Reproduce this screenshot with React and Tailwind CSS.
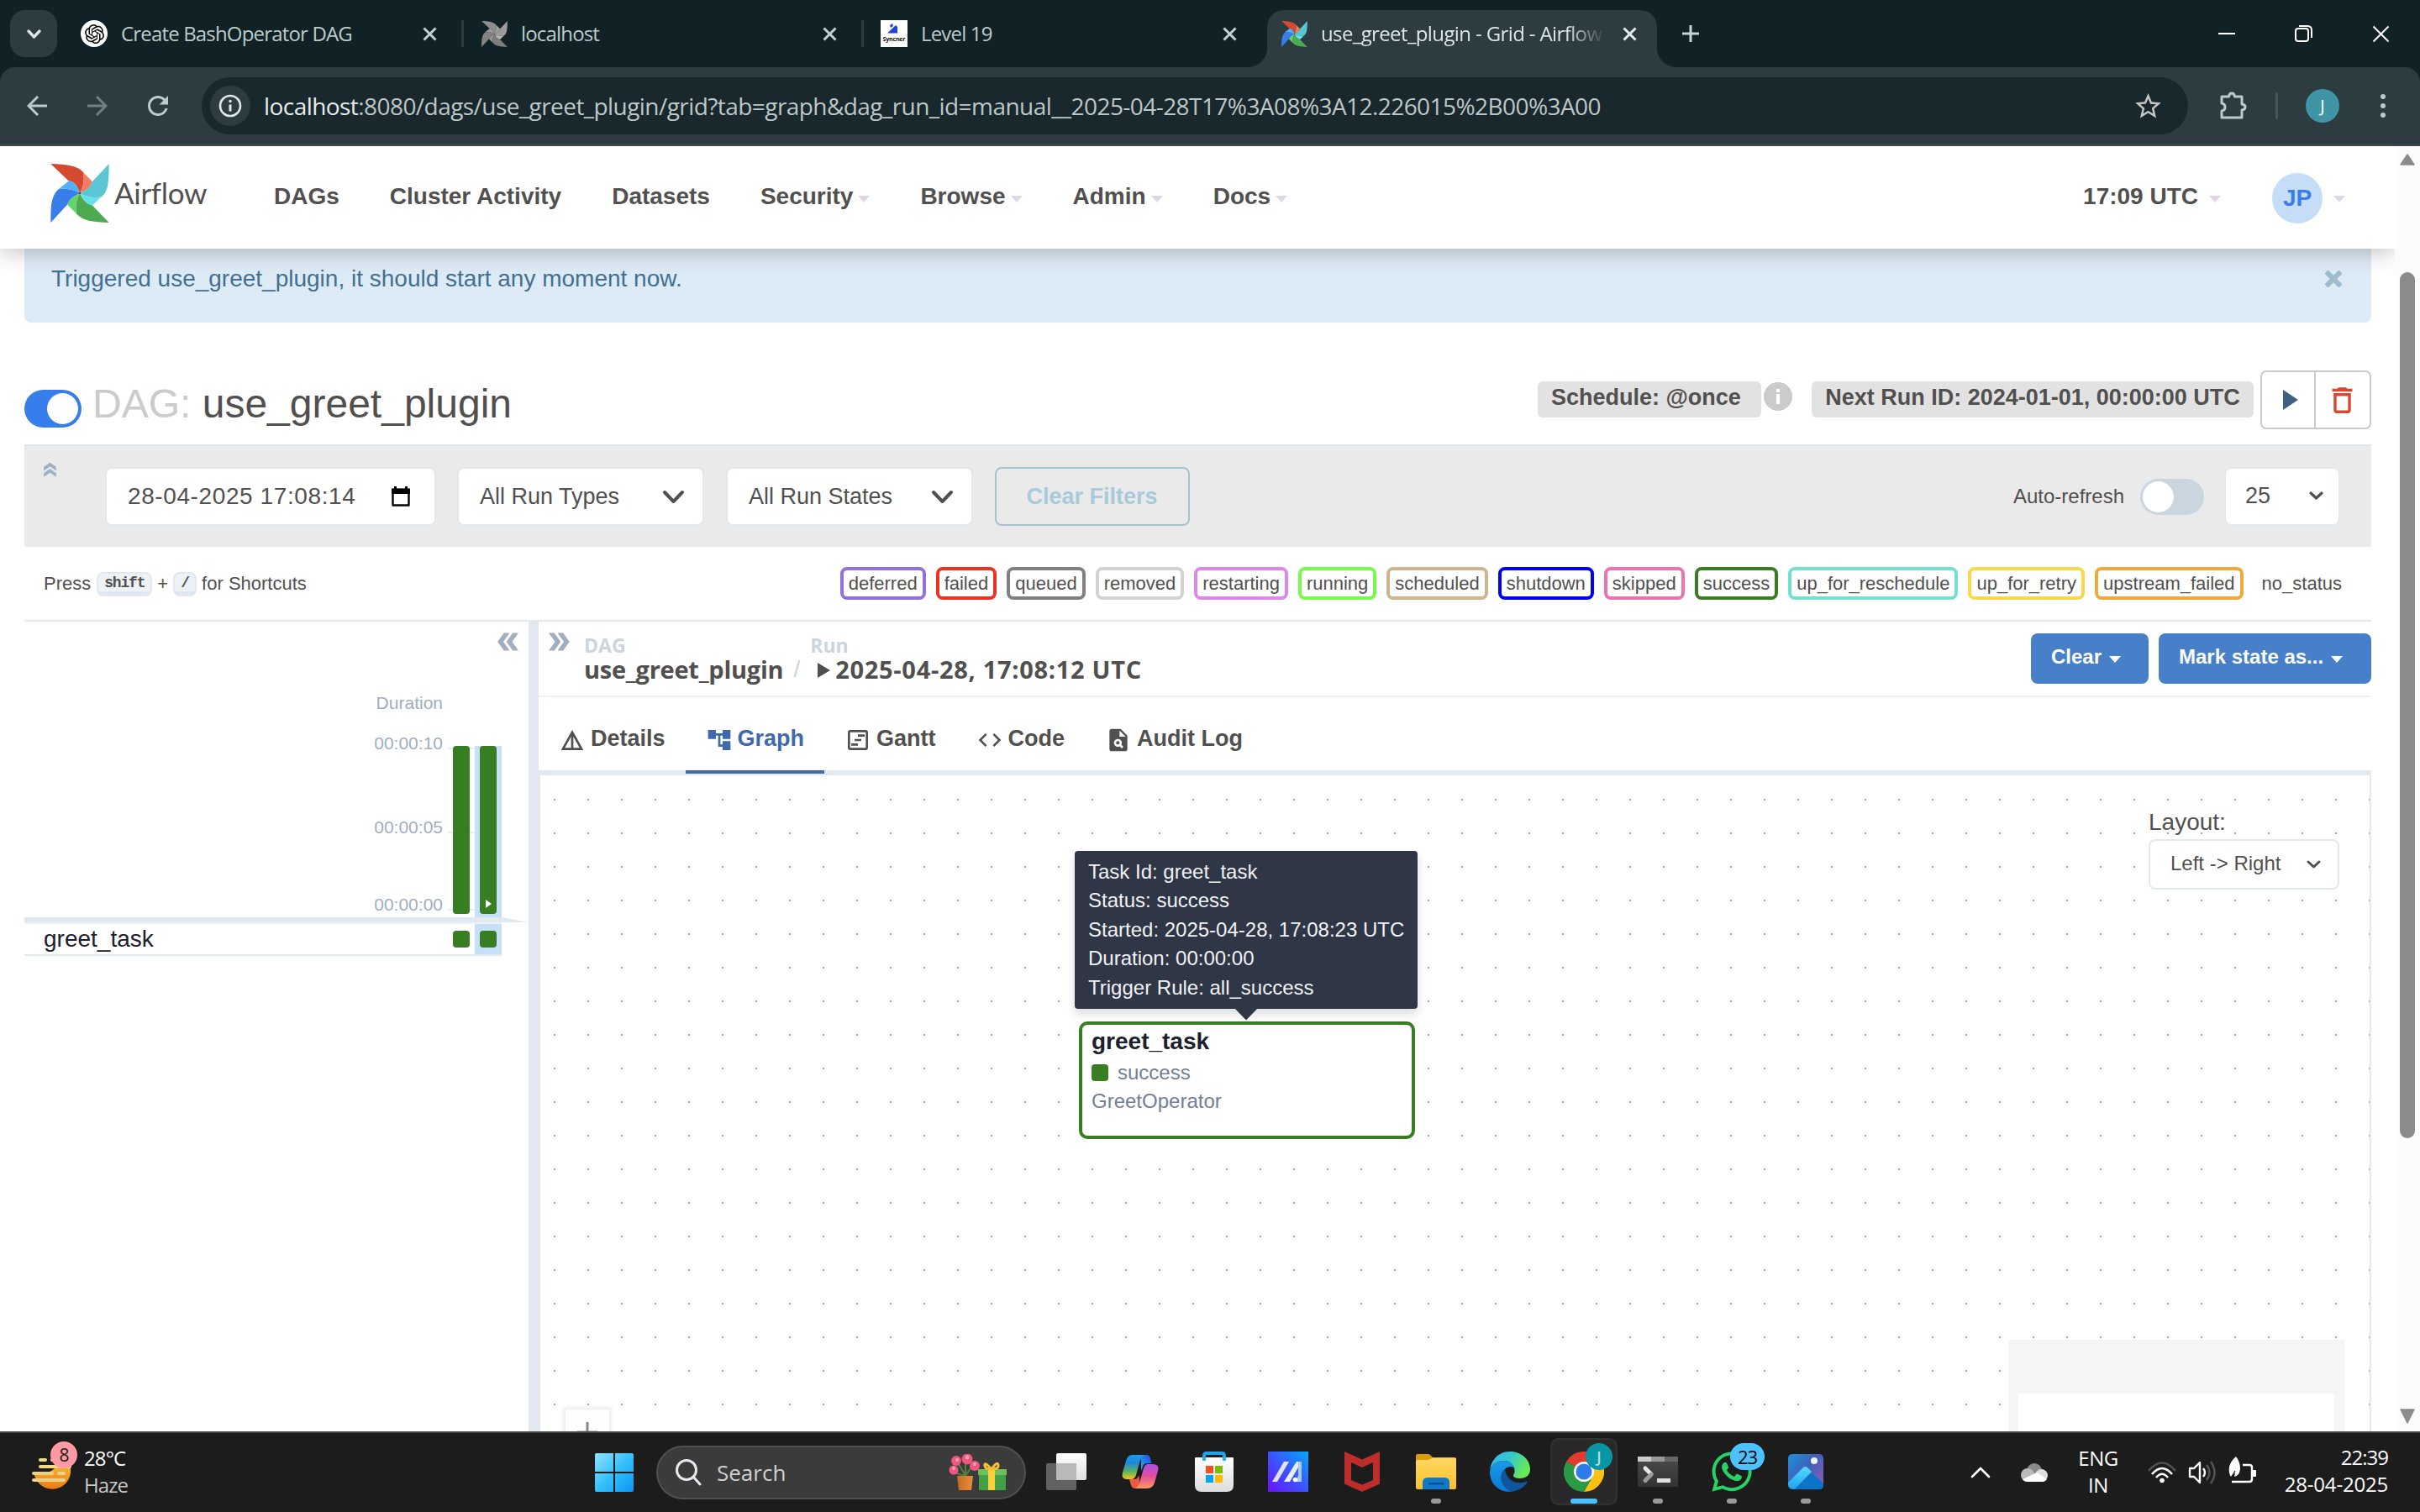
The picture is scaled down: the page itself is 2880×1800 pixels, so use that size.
import React from "react";
import { MdDetails, MdAccountTree, MdOutlineViewTimeline, MdCode, MdPlagiarism, MdDoubleArrow, MdDeleteOutline, MdRefresh, MdStarOutline } from "react-icons/md";
import { SiOpenai } from "react-icons/si";
import { FaWhatsapp } from "react-icons/fa";

const UI = "font-['Open_Sans',sans-serif]";

function Pinwheel({ className, gray }) {
  const c = gray
    ? ["#8d8d8d", "#a3a3a3", "#9b9b9b", "#b5b5b5", "#7d7d7d", "#949494", "#848484", "#999999"]
    : ["#d44a30", "#f17d61", "#5ac6d3", "#67dfed", "#4daa50", "#62d56a", "#377deb", "#50b0fa"];
  return (
    <svg className={className} viewBox="89 283 212 212">
      <path fill={c[0]} d="M90 283C150 284 190 292 207 313C213 340 208 365 195 389C188 365 175 345 155 345Z" />
      <path fill={c[1]} d="M207 313L240 347C235 368 215 378 195 389C208 365 213 340 207 313Z" />
      <path fill={c[2]} d="M300 283C300 350 297 385 272 403C240 408 215 400 195 389C215 378 235 368 240 347Z" />
      <path fill={c[3]} d="M272 403L240 433C222 430 205 415 195 389C215 400 240 408 272 403Z" />
      <path fill={c[4]} d="M300 495C240 493 205 488 183 463C178 440 180 415 195 389C205 415 222 430 240 433Z" />
      <path fill={c[5]} d="M183 463L150 430C155 410 175 398 195 389C180 415 178 440 183 463Z" />
      <path fill={c[6]} d="M90 495C90 430 92 400 117 375C150 370 175 378 195 389C175 398 155 410 150 430Z" />
      <path fill={c[7]} d="M117 375L155 345C175 345 188 365 195 389C175 378 150 370 117 375Z" />
      <circle cx="195" cy="389" r="4" fill="#4a4848" />
    </svg>
  );
}

function Cross({ size, stroke = 3, className = "" }) {
  return (
    <svg width={size} height={size} viewBox={`0 0 ${size} ${size}`} className={className}>
      <path d={`M1.5 1.5L${size - 1.5} ${size - 1.5}M${size - 1.5} 1.5L1.5 ${size - 1.5}`} stroke="currentColor" strokeWidth={stroke} fill="none" />
    </svg>
  );
}

function Chevron({ w, h, stroke, className = "" }) {
  return (
    <svg width={w} height={h} viewBox={`0 0 ${w} ${h}`} className={`shrink-0 overflow-visible ${className}`}>
      <path d={`M2 2L${w / 2} ${h - 2}L${w - 2} 2`} stroke="currentColor" strokeWidth={stroke} fill="none" strokeLinecap="round" strokeLinejoin="round" />
    </svg>
  );
}

function Caret({ className = "" }) {
  return (
    <svg width="14" height="8" viewBox="0 0 14 8" className={className}>
      <path d="M0 0H14L7 8Z" fill="currentColor" />
    </svg>
  );
}

function Tab({ icon, title, active, last }) {
  return (
    <div className="flex h-[56px] w-[476px] items-center">
      <div className="flex w-[32px] items-center justify-center">{icon}</div>
      <div className={active
        ? "ml-[16px] w-[339px] overflow-hidden whitespace-nowrap text-[24px] tracking-[-0.62px] text-[#dfe5e6] [mask-image:linear-gradient(to_right,black_86%,transparent)]"
        : "ml-[16px] w-[339px] overflow-hidden whitespace-nowrap text-[24px] tracking-[-0.83px] text-[#bccaca]"}>{title}</div>
      <div className={active ? "ml-[20px] text-[#e3ecec]" : "ml-[20px] text-[#c3d0d2]"}><Cross size={17} stroke={3} /></div>
      {!last && <div className="ml-[29px] h-[32px] w-[3px] bg-[#2c3c40]" />}
    </div>
  );
}

function ChromeTabs() {
  return (
    <div className={`flex h-[80px] shrink-0 items-center bg-[#112226] ${UI}`}>
      <div className="ml-[12px] flex h-[56px] w-[56px] items-center justify-center rounded-[18px] bg-[#2c3c40] text-[#dbe4e4]">
        <Chevron w={17} h={11} stroke={3.4} />
      </div>
      <div className="w-[28px]" />
      <Tab title="Create BashOperator DAG" icon={<div className="flex size-[32px] items-center justify-center rounded-full bg-white text-black"><SiOpenai size={23} /></div>} />
      <Tab title="localhost" icon={<Pinwheel gray className="size-[31px]" />} />
      <Tab last title="Level 19" icon={
        <svg width="32" height="32" viewBox="0 0 32 32">
          <rect width="32" height="32" fill="#fff" />
          <path d="M8 15.500L18 6L20 8V15.500ZM11 6l3-2 1 3-3 2Z" fill="#2143dd" />
          <text x="2.500" y="25" fontSize="7" fontWeight="700" fontFamily="Open Sans" textLength="27" fill="#111">Syncner</text>
        </svg>} />
      <div className="relative -ml-[16px] mt-[12px] flex h-[68px] w-[464px] items-start rounded-t-[20px] bg-[#2c3c40] pl-[16px]">
        <Tab active last title="use_greet_plugin - Grid - Airflow" icon={<Pinwheel className="size-[31px]" />} />
        <svg className="absolute bottom-0 -left-[24px]" width="24" height="24" viewBox="0 0 24 24"><path d="M24 0V24H0C14 24 24 14 24 0Z" fill="#2c3c40" /></svg>
        <svg className="absolute bottom-0 -right-[24px]" width="24" height="24" viewBox="0 0 24 24"><path d="M0 0V24H24C10 24 0 14 0 0Z" fill="#2c3c40" /></svg>
      </div>
      <svg className="ml-[30px]" width="20" height="20" viewBox="0 0 20 20"><path d="M10 0V20M0 10H20" stroke="#c6d4d6" strokeWidth="3" /></svg>
      <div className="ml-auto flex items-center pr-[36px] text-white">
        <div className="h-[2px] w-[20px] bg-white" />
        <svg className="ml-[71px]" width="22" height="22" viewBox="0 0 22 22" fill="none" stroke="#fff" strokeWidth="2"><rect x="1" y="5" width="15" height="15" rx="3" /><path d="M5 2H15Q20 2 20 7V16" /></svg>
        <div className="ml-[70px]"><Cross size={21} stroke={2} /></div>
      </div>
    </div>
  );
}

function ChromeToolbar() {
  return (
    <div className="shrink-0 bg-[#112226]">
      <div className={`flex h-[94px] items-center rounded-t-[18px] border-b-2 border-[#40484b] bg-[#2c3c40] text-[#b9cbce] ${UI}`}>
        <svg className="ml-[32px]" width="24" height="24" viewBox="0 0 24 24" fill="none" stroke="#b9cbce" strokeWidth="3"><path d="M24 12H2M13 1L2 12L13 23" /></svg>
        <svg className="ml-[48px]" width="24" height="24" viewBox="0 0 24 24" fill="none" stroke="#6f7f83" strokeWidth="3"><path d="M0 12H22M11 1L22 12L11 23" /></svg>
        <MdRefresh size={36} className="ml-[42px]" />
        <div className="ml-[34px] flex h-[68px] w-[2364px] items-center rounded-full bg-[#18282c] pl-[10px]">
          <div className="flex size-[48px] items-center justify-center rounded-full bg-[#2c3c40]">
            <svg width="28" height="28" viewBox="0 0 28 28"><circle cx="14" cy="14" r="12" fill="none" stroke="#dfe6e7" strokeWidth="2.600" /><path d="M14 12.500V20.500" stroke="#dfe6e7" strokeWidth="3" /><circle cx="14" cy="8.500" r="1.800" fill="#dfe6e7" /></svg>
          </div>
          <div className="ml-[16px] whitespace-nowrap text-[28px] tracking-[-0.56px] text-[#bcc7c8]"><span className="text-[#e7edee]">localhost</span>:8080/dags/use_greet_plugin/grid?tab=graph&amp;dag_run_id=manual__2025-04-28T17%3A08%3A12.226015%2B00%3A00</div>
          <MdStarOutline size={37} className="mr-[29px] ml-auto text-[#c6c6c4]" />
        </div>
        <svg className="ml-[36px]" width="34" height="34" viewBox="0 0 34 34" fill="none" stroke="#b9cbce" strokeWidth="3" strokeLinejoin="round"><path d="M4 6H12.500Q13 2 16 2Q19 2 19.500 6H28V15Q32 15.500 32 18.500Q32 21.500 28 22V31H4V23Q8 22.500 8 18.500Q8 14.500 4 14Z" /></svg>
        <div className="ml-[34px] h-[32px] w-[3px] rounded bg-[#48575b]" />
        <div className="ml-[33px] flex size-[40px] items-center justify-center rounded-full bg-[#3f95a5] text-[20px] text-white">J</div>
        <svg className="ml-[49px]" width="6" height="30" viewBox="0 0 6 30" fill="#b9cbce"><circle cx="3" cy="4" r="3" /><circle cx="3" cy="15" r="3" /><circle cx="3" cy="26" r="3" /></svg>
      </div>
    </div>
  );
}

function NavItem({ label, menu }) {
  return (
    <div className="flex items-center whitespace-nowrap">
      {label}
      {menu && <Caret className="ml-[6px] mt-[5px] text-[#e0d5e3]" />}
    </div>
  );
}

function Navbar() {
  return (
    <div className="relative z-10 flex h-[122px] shrink-0 items-center bg-white pl-[60px] shadow-[0_6px_24px_rgba(0,0,0,0.22)]">
      <Pinwheel className="mb-[11px] size-[70px]" />
      <div className="mb-[12px] ml-[6px] w-[109px] font-['Lato',sans-serif] text-[35px] tracking-[-0.3px] text-[#51504f]">Airflow</div>
      <div className="mb-[2px] ml-[81px] flex gap-[60px] text-[28px] font-bold text-[#51504f]">
        <NavItem label="DAGs" />
        <NavItem label="Cluster Activity" />
        <NavItem label="Datasets" />
        <NavItem label="Security" menu />
        <NavItem label="Browse" menu />
        <NavItem label="Admin" menu />
        <NavItem label="Docs" menu />
      </div>
      <div className="ml-auto flex items-center pr-[59px] text-[28px] font-bold text-[#51504f]">
        <span className="mb-[2px] whitespace-nowrap">17:09 UTC</span>
        <Caret className="ml-[13px] mt-[3px] text-[#e0d5e3]" />
        <div className="ml-[61px] mt-[2px] flex size-[60px] items-center justify-center rounded-full bg-[#c6ddf8] text-[28px] text-[#377deb]">JP</div>
        <Caret className="ml-[13px] mt-[3px] text-[#e0d5e3]" />
      </div>
    </div>
  );
}

function DagHeader() {
  return (
    <div className="flex h-[145px] items-start">
      <div className="mt-[80px] flex h-[45px] w-[68px] items-center justify-end rounded-full bg-[#377deb] pr-[4px]"><div className="size-[37px] rounded-full bg-white" /></div>
      <div className="ml-[13px] mt-[69px] whitespace-nowrap text-[48px] leading-[56px] text-[#51504f]"><span className="text-[#cbcbcb]">DAG:</span> use_greet_plugin</div>
      <div className="ml-auto flex text-[27px] font-bold text-[#51504f]">
        <div className="mt-[70px] flex h-[43px] w-[266px] items-center whitespace-pre rounded-[6px] bg-[#e2e2e2] pb-[4px] pl-[16px]">Schedule: @once</div>
        <div className="ml-[3px] mt-[71px] flex size-[34px] items-center justify-center rounded-full bg-[#cbcbcb]">
          <svg width="6" height="18" viewBox="0 0 6 18" fill="#fff"><rect x="1" width="4" height="4" /><rect x="1" y="6" width="4" height="12" /></svg>
        </div>
        <div className="ml-[23px] mt-[70px] flex h-[43px] w-[526px] items-center justify-center whitespace-nowrap rounded-[6px] bg-[#e2e2e2] pb-[4px]">Next Run ID: 2024-01-01, 00:00:00 UTC</div>
        <div className="ml-[8px] mt-[57px] flex h-[70px] w-[132px] rounded-[7px] border-2 border-[#cbcbcb] bg-white">
          <div className="flex w-[64px] items-center justify-center border-r-2 border-[#cbcbcb] pl-[5px]"><svg width="18" height="24" viewBox="0 0 18 24"><path d="M0 0L18 12L0 24Z" fill="#3f5f85" /></svg></div>
          <div className="flex flex-1 items-center justify-center pr-[1px]"><MdDeleteOutline size={41} className="text-[#d44a30]" /></div>
        </div>
      </div>
    </div>
  );
}

function FilterBar() {
  const box = "flex h-[70px] items-center rounded-[8px] border-2 border-[#e2e8f0] bg-white";
  return (
    <div className="flex h-[122px] items-start border-t-2 border-[#dfe6ee] bg-[#eaeaea] pl-[18px] pt-[25px] text-[27px] text-[#51504f]">
      <MdDoubleArrow size={25} className="-mt-[9px] shrink-0 -rotate-90 text-[#a0aec0]" />
      <div className={`ml-[53px] w-[394px] justify-between pl-[25px] pr-[29px] ${box}`}>
        <span className="whitespace-nowrap text-[28px] tracking-[0.6px]">28-04-2025 17:08:14</span>
        <svg width="22" height="24" viewBox="0 0 22 24"><path d="M1.500 4H20.500V22.500H1.500Z" fill="none" stroke="#000" strokeWidth="2.400" strokeLinejoin="round" /><path d="M0 2.500H22V9H0ZM3 0H6V4H3ZM16 0H19V4H16Z" fill="#000" /></svg>
      </div>
      <div className={`ml-[25px] w-[294px] justify-between pl-[25px] pr-[22px] ${box}`}>All Run Types<Chevron w={25} h={15} stroke={4} /></div>
      <div className={`ml-[26px] w-[294px] justify-between pl-[25px] pr-[22px] ${box}`}>All Run States<Chevron w={25} h={15} stroke={4} /></div>
      <div className="ml-[26px] flex h-[70px] w-[232px] items-center justify-center rounded-[8px] border-2 border-[#a6c4cf] pr-[1px] font-bold text-[#a9cadb]">Clear Filters</div>
      <div className="ml-auto flex h-[70px] items-center pr-[37px]">
        <span className="text-[24px]">Auto-refresh</span>
        <div className="ml-[19px] flex h-[43px] w-[76px] items-center rounded-full bg-[#cbd5e0] pl-[3px]"><div className="size-[37px] rounded-full bg-white" /></div>
        <div className="ml-[24px] flex h-[70px] w-[138px] items-center justify-between rounded-[8px] border-2 border-[#e2e8f0] bg-white pb-[2px] pl-[23px] pr-[18px]">25<Chevron w={17} h={10} stroke={3.2} /></div>
      </div>
    </div>
  );
}

const STATES = [
  ["deferred", "border-[#9370db]"], ["failed", "border-[#ea3323]"], ["queued", "border-[#808080]"], ["removed", "border-[#d3d3d3]"],
  ["restarting", "border-[#df87e8]"], ["running", "border-[#75fb4c]"], ["scheduled", "border-[#cfb58f]"], ["shutdown", "border-[#0000f5]"],
  ["skipped", "border-[#ee72b2]"], ["success", "border-[#377e22]"], ["up_for_reschedule", "border-[#73dfd0]"], ["up_for_retry", "border-[#f9d949]"],
  ["upstream_failed", "border-[#f2a93b]"], ["no_status", "border-white"],
];

function Legend() {
  const kbd = "inline-flex h-[29px] items-center rounded-[8px] border-2 border-b-[6px] border-[#e2e8f0] bg-[#edf2f7] font-['Liberation_Mono',monospace] text-[18px] font-bold tracking-[-1.2px]";
  return (
    <div className="flex h-[89px] items-center justify-between border-b-2 border-[#e2e8f0] pl-[23px] pr-[25px] text-[22px] text-[#51504f]">
      <div className="flex items-center whitespace-nowrap">
        Press<span className={`ml-[7px] mt-[1px] w-[66px] justify-center pt-[2px] ${kbd}`}>shift</span>
        <span className="ml-[6px]">+</span><span className={`ml-[6px] mt-[1px] w-[28px] justify-center pt-[2px] ${kbd}`}>/</span>
        <span className="ml-[6px]">for Shortcuts</span>
      </div>
      <div className="flex gap-[12px]">
        {STATES.map(([name, border]) => (
          <div key={name} className={`flex h-[39px] items-center rounded-[8px] border-4 px-[6px] ${border}`}>{name}</div>
        ))}
      </div>
    </div>
  );
}

function GridPanel() {
  return (
    <div className="flex w-[600px] shrink-0 flex-col">
      <div className="flex h-[48px] items-start justify-end pr-[6px] pt-[6px]"><MdDoubleArrow size={36} className="rotate-180 text-[#a0aec0]" /></div>
      <div className="flex h-[304px] justify-end pr-[32px]">
        <div className="mr-[6px] flex flex-col items-end pt-[37px] text-[21px] leading-[24px] text-[#a0aec0]">
          <span>Duration</span>
          <span className="mt-[24px]">00:00:10</span>
          <span className="mt-[76px]">00:00:05</span>
          <span className="mt-[68px]">00:00:00</span>
        </div>
        <div className="flex items-end bg-[linear-gradient(#e8edf3,#e8edf3),linear-gradient(#e8edf3,#e8edf3),linear-gradient(#e8edf3,#e8edf3)] bg-[length:64px_2px] bg-[position:0_102px,0_202px,0_294px] bg-no-repeat pl-[6px]">
          <div className="mb-[4px] h-[200px] w-[20px] rounded-[4px] bg-[#377e22]" />
          <div className="ml-[6px] h-[204px] w-[32px] bg-[#c6e1f7] px-[6px]">
            <div className="flex h-[200px] items-end justify-center rounded-[4px] bg-[#377e22] pb-[7px]"><svg width="7" height="10" viewBox="0 0 7 10"><path d="M0 0L7 5L0 10Z" fill="#fff" /></svg></div>
          </div>
        </div>
      </div>
      <svg width="600" height="6" viewBox="0 0 600 6"><path d="M0 0H568L600 6H0Z" fill="#e2e8f0" /></svg>
      <div className="flex h-[40px] w-[568px] items-center border-b-2 border-t-2 border-b-[#e2e8f0] border-t-[#edf2f7] pl-[23px]">
        <span className="text-[28px] text-[#1a202c]">greet_task</span>
        <div className="ml-auto size-[20px] rounded-[4px] bg-[#377e22]" />
        <div className="ml-[6px] flex h-[36px] w-[32px] items-center justify-center bg-[#c6e1f7]"><div className="size-[20px] rounded-[4px] bg-[#377e22]" /></div>
      </div>
    </div>
  );
}

function RunTab({ Icon, label, active }) {
  return (
    <div className={active
      ? "relative z-10 -mb-[6px] flex h-[91px] items-center border-b-4 border-[#4069ae] px-[24px] text-[#3f69ac]"
      : "flex h-[87px] items-center px-[24px]"}>
      <Icon size={32} className="mr-[6px] mt-[14px]" />
      <span className="mt-[11px] whitespace-nowrap text-[27px] font-bold">{label}</span>
    </div>
  );
}

function GraphCanvas() {
  return (
    <div className="relative flex-1 overflow-hidden border-l-2 border-r-2 border-[#e2e8f0] text-[24px] text-[#51504f]">
      <svg className="absolute inset-0" width="100%" height="100%">
        <defs><pattern id="dots" x="16" y="28" width="40" height="40" patternUnits="userSpaceOnUse"><rect width="2" height="2" fill="#a3a3a3" /></pattern></defs>
        <rect width="100%" height="100%" fill="url(#dots)" />
      </svg>
      <div className="absolute left-[641px] top-[293px] flex h-[140px] w-[400px] flex-col rounded-[10px] border-4 border-[#377e22] bg-white pl-[11px] text-[#718096]">
        <span className="mt-[3px] text-[28px] font-bold leading-[34px] text-[#1a202c]">greet_task</span>
        <span className="mt-[4px] flex h-[32px] items-center"><i className="mr-[11px] size-[20px] rounded-[4px] bg-[#377e22]" />success</span>
        <span className="mt-px leading-[34px]">GreetOperator</span>
      </div>
      <div className="absolute left-[636px] top-[90px] h-[188px] w-[408px] rounded-[4px] bg-[#2f3747] pl-[16px] pt-[8px] leading-[34.4px] text-[#f0f2f5] shadow-[0_6px_12px_rgba(0,0,0,0.14)]">
        <div>Task Id: greet_task</div>
        <div>Status: success</div>
        <div className="whitespace-nowrap">Started: 2025-04-28, 17:08:23 UTC</div>
        <div>Duration: 00:00:00</div>
        <div>Trigger Rule: all_success</div>
        <svg className="absolute left-[190px] top-[187px]" width="28" height="15" viewBox="0 0 28 15"><path d="M0 0H28L14 14.500Z" fill="#2f3747" /></svg>
      </div>
      <div className="absolute right-[36px] top-[38px] w-[227px]">
        <div className="text-[28px] leading-[36px]">Layout:</div>
        <div className="mt-[2px] flex h-[60px] items-center justify-between rounded-[8px] border-2 border-[#e2e8f0] bg-white/90 pb-[2px] pl-[24px] pr-[20px]">Left -&gt; Right<Chevron w={17} h={10} stroke={3} className="mt-[2px]" /></div>
      </div>
      <div className="absolute left-[30px] top-[755px] flex h-[60px] w-[52px] justify-center bg-[#fefefe] pt-[15px] shadow-[0_0_4px_3px_rgba(0,0,0,0.07)]">
        <svg width="24" height="24" viewBox="0 0 24 24"><path d="M12 0V24M0 12H24" stroke="#888" strokeWidth="3" /></svg>
      </div>
      <div className="absolute right-[30px] top-[672px] h-[140px] w-[400px] bg-[#f5f5f5] px-[12px] pt-[64px]"><div className="h-full bg-white" /></div>
    </div>
  );
}

function RunPanel() {
  const btn = "flex h-[60px] items-center rounded-[8px] bg-[#4780c8] pb-[5px] text-[24px] font-bold text-white";
  return (
    <div className="flex min-w-0 flex-1 flex-col text-[#51504f]">
      <div className="flex h-[90px] items-start border-b-2 border-[#edf0f5] pl-[6px]">
        <MdDoubleArrow size={36} className="mt-[6px] text-[#a0aec0]" />
        <div className={`ml-[12px] mt-[15px] ${UI}`}>
          <div className="text-[23px] font-bold leading-[26px] text-[#cbd5e0]">DAG</div>
          <div className="text-[29px] font-bold leading-[32px] tracking-[-0.25px]">use_greet_plugin</div>
        </div>
        <div className="ml-[12px] mt-[43px] text-[28px] leading-[28px] text-[#cbd5e0]">/</div>
        <div className={`ml-[12px] mt-[15px] ${UI}`}>
          <div className="text-[23px] font-bold leading-[26px] text-[#cbd5e0]">Run</div>
          <div className="flex items-center whitespace-nowrap text-[29px] font-bold leading-[32px] tracking-[0.7px]"><svg className="ml-[9px] mr-[6px] mt-[2px]" width="15" height="18" viewBox="0 0 15 18"><path d="M0 0L15 9L0 18Z" fill="#51504f" /></svg>2025-04-28, 17:08:12 UTC</div>
        </div>
        <div className="ml-auto mt-[14px] flex gap-[12px]">
          <div className={`w-[140px] pl-[24px] ${btn}`}>Clear<Caret className="ml-[9px] mt-[6px]" /></div>
          <div className={`w-[253px] whitespace-nowrap pl-[24px] ${btn}`}>Mark state as...<Caret className="ml-[9px] mt-[6px]" /></div>
        </div>
      </div>
      <div className="flex h-[93px] border-b-[6px] border-[#e2e8f0]">
        <RunTab Icon={MdDetails} label="Details" />
        <RunTab Icon={MdAccountTree} label="Graph" active />
        <RunTab Icon={MdOutlineViewTimeline} label="Gantt" />
        <RunTab Icon={MdCode} label="Code" />
        <RunTab Icon={MdPlagiarism} label="Audit Log" />
      </div>
      <GraphCanvas />
    </div>
  );
}

function Scrollbar() {
  return (
    <div className="flex w-[30px] shrink-0 flex-col items-center bg-[#fcfcfc]">
      <svg className="mt-[9px] shrink-0" width="18" height="14" viewBox="0 0 18 14"><path d="M9 1L17 13H1Z" fill="#8b8b8b" stroke="#8b8b8b" strokeWidth="1.500" strokeLinejoin="round" /></svg>
      <div className="mt-[127px] h-[1031px] w-[18px] rounded-full bg-[#8b8b8b]" />
      <svg className="mb-[9px] mt-auto shrink-0" width="18" height="19" viewBox="0 0 18 19"><path d="M9 18L17 2H1Z" fill="#8b8b8b" stroke="#8b8b8b" strokeWidth="1.500" strokeLinejoin="round" /></svg>
    </div>
  );
}

function TaskItem({ children, dot }) {
  return (
    <div className="relative flex h-[94px] w-[88px] shrink-0 items-center justify-center pb-[2px]">
      {children}
      {dot && <div className="absolute bottom-[10px] left-[38px] h-[6px] w-[12px] rounded-full bg-[#9a9a9a]" />}
    </div>
  );
}

function Gradients() {
  const g = (id, stops, v = [0, 0, 0, 1]) => (
    <linearGradient key={id} id={id} x1={v[0]} y1={v[1]} x2={v[2]} y2={v[3]}>
      {stops.map((c, i) => <stop key={i} offset={i / (stops.length - 1)} stopColor={c} />)}
    </linearGradient>
  );
  return (
    <svg className="absolute" width="0" height="0"><defs>
      {g("win", ["#8fe3ff", "#35c1fb", "#0a93f5"], [0, 0, 1, 1])}
      {g("haze", ["#f2b52f", "#ee7a1a"])}
      {g("tv", ["#ffffff", "#dedede"])}
      {g("copA", ["#1d9df0", "#1e86d8", "#57b062", "#f2cb11"])}
      {g("copB", ["#a84ee8", "#e54d9b", "#fb9a5b"])}
      {g("copC", ["#1c4ed8", "#2aa7f0"], [1, 0, 0, 1])}
      {g("store", ["#ffffff", "#dcdcdc"])}
      {g("asus", ["#02a9ff", "#3a55ff", "#6b12ff"], [1, 0, 0, 1])}
      {g("fold", ["#ffd862", "#fbbf2c"])}
      {g("edgeA", ["#35b6f5", "#36c6d0", "#66ea55"], [0, 0, 1, 0.4])}
      {g("edgeB", ["#1a9be6", "#0a78d6"])}
      {g("photo", ["#1f8fe0", "#3c63b9", "#8a5bb5"], [0, 0, 1, 0.8])}
      {g("mount", ["#55dcff", "#1ea2ee"])}
      {g("term", ["#4b4b4b", "#333333"])}
      {g("pot", ["#c46a26", "#e98f3d"], [0, 0, 1, 0])}
    </defs></svg>
  );
}

function Taskbar() {
  return (
    <div className={`flex h-[96px] shrink-0 items-center border-t-2 border-[#444446] bg-[#1c1c1c] text-[24px] text-white ${UI}`}>
      <Gradients />
      <svg className="ml-[37px] shrink-0" width="56" height="74" viewBox="0 0 56 74">
        <path d="M3.500 38C8 41 22 38 28 32L46.500 29A22 22 0 1 1 3.500 38Z" fill="url(#haze)" />
        <g fill="#f4d97f"><rect x="9" y="20" width="10" height="4" rx="2" /><rect x="23" y="20" width="20" height="4" rx="2" /><rect x="9" y="28" width="39" height="4" rx="2" /></g>
        <g fill="#ead08c"><rect x="1" y="36" width="26" height="4" rx="2" /><rect x="31" y="36" width="10" height="4" rx="2" /><rect x="1" y="44" width="40" height="4" rx="2" /></g>
        <circle cx="39" cy="16" r="16" fill="#ff99a4" />
        <text x="39.500" y="23.500" fontSize="21" textAnchor="middle" fill="#1c1c1c">8</text>
      </svg>
      <div className="ml-[7px] w-[591px] shrink-0 pb-[3px] leading-[32px]"><div className="tracking-[-0.9px]">28°C</div><div className="tracking-[-0.9px] text-[#c8c8c8]">Haze</div></div>
      <svg className="mr-[10px] shrink-0" width="80" height="46" viewBox="0 0 80 46" fill="url(#win)"><path d="M17 2Q17 0 19 0H39V22H17ZM41 0H61Q63 0 63 2V22H41ZM17 24H39V46H19Q17 46 17 44ZM41 24H63V44Q63 46 61 46H41Z" /></svg>
      <div className="flex h-[64px] w-[440px] shrink-0 items-center rounded-full border-2 border-[#505050] bg-[#3b3b3b] pl-[20px] pr-[20px]">
        <svg width="32" height="32" viewBox="0 0 32 32" fill="none" stroke="#e6eaec" strokeWidth="3" strokeLinecap="round"><circle cx="14" cy="13" r="11.500" /><path d="M22 21L30 30" /></svg>
        <span className="ml-[18px] text-[26px] text-[#d0d0d0]">Search</span>
        <svg className="ml-auto" width="70" height="44" viewBox="0 0 70 44">
          <g stroke="#53823f" strokeWidth="2" fill="none"><path d="M20 26Q14 14 9 10M20 26V8M20 26Q26 16 31 12M20 26Q10 24 6 20" /></g>
          <g fill="#f0577f"><circle cx="9" cy="8" r="6" /><circle cx="22" cy="6" r="6.500" /><circle cx="31" cy="14" r="6" /><circle cx="6" cy="19" r="5.500" /></g>
          <g fill="#ffa3b5"><circle cx="10" cy="7" r="2" /><circle cx="22" cy="4" r="2.400" /><circle cx="31" cy="12" r="2" /><circle cx="6" cy="17" r="2" /></g>
          <path d="M10 26H29L27 43H12Z" fill="url(#pot)" />
          <rect x="36" y="20" width="32" height="23" fill="#43a047" /><rect x="35" y="18" width="34" height="7" rx="1" fill="#6fc05b" />
          <rect x="47" y="18" width="8" height="25" fill="#fbd03c" /><path d="M51 18Q42 8 43 14Q43 18 51 18Q60 18 59 13Q58 8 51 18Z" fill="none" stroke="#f5c134" strokeWidth="3" />
        </svg>
      </div>
      <div className="w-[4px] shrink-0" />
      <TaskItem><svg width="48" height="44" viewBox="0 0 48 44"><rect x="12" width="36" height="32" rx="2" fill="url(#tv)" /><rect y="12" width="36" height="32" rx="2" fill="#6f6f6f" fillOpacity=".85" /><rect x="12" y="12" width="24" height="20" fill="#b9b9b9" /></svg></TaskItem>
      <TaskItem><svg width="46" height="42" viewBox="0 0 46 42">
        <path d="M24 1H30Q34 1 35 5L36.500 11H31Q27 11 26 15L24 20Z" fill="url(#copC)" />
        <path d="M10 30H16Q20 30 21.500 25L23 41H17Q13 41 12 37Z" fill="#ef5a3c" />
        <path d="M14 1H28Q24 3 22.500 9L18 25Q16.500 30 12 30H7Q0 30 2 22L6 8Q8 1 14 1Z" fill="url(#copA)" />
        <path d="M32 12H38Q46 12 44 20L40 34Q38 41 31 41H17Q21 39 22.500 33L27 17Q28.500 12 32 12Z" fill="url(#copB)" />
      </svg></TaskItem>
      <TaskItem><svg width="46" height="48" viewBox="0 0 46 48"><path d="M11 11V5Q11 2 14 2H32Q35 2 35 5V11" fill="none" stroke="#1fa4ec" strokeWidth="4" /><path d="M0 8Q0 7 1 7H45Q46 7 46 8V40Q46 48 38 48H8Q0 48 0 40Z" fill="url(#store)" /><path d="M9 7H13V11H9ZM33 7H37V11H33Z" fill="#27b5f0" /><rect x="13" y="17" width="9" height="9" fill="#f25022" /><rect x="24" y="17" width="9" height="9" fill="#7fba00" /><rect x="13" y="28" width="9" height="9" fill="#00a4ef" /><rect x="24" y="28" width="9" height="9" fill="#ffb900" /></svg></TaskItem>
      <TaskItem><svg width="48" height="48" viewBox="0 0 48 48"><rect width="48" height="48" fill="url(#asus)" /><path d="M19 12H25L11 36H5Z" fill="#dfe3ff" /><path d="M34 12H40L26 36H19Z" fill="#e9edff" /><path d="M36 12H40V36H34L36 28Z" fill="#a9c9ff" /><circle cx="32.500" cy="33.500" r="2.800" fill="#fff" /></svg></TaskItem>
      <TaskItem><svg width="42" height="48" viewBox="0 0 42 48"><path d="M0 0L21 9.500L42 0V38.500L21 48L0 38.500ZM8 13V34L21 39.500L34 34V13L21 19Z" fill="#bc2d2b" fillRule="evenodd" /></svg></TaskItem>
      <TaskItem dot><svg width="48" height="42" viewBox="0 0 48 42"><path d="M0 2Q0 0 2 0H14Q16 0 17 1L20 4H46Q48 4 48 6V20H0Z" fill="#dc9c06" /><path d="M0 9Q0 7 2 7H15L20 4.500H46Q48 4.500 48 6.500V40Q48 42 46 42H2Q0 42 0 40Z" fill="url(#fold)" /><path d="M8 42V34Q8 28 14 28H34Q40 28 40 34V42Z" fill="#0f78c8" /><rect x="15" y="34" width="18" height="2.400" fill="#0a4f96" /></svg></TaskItem>
      <TaskItem><svg width="48" height="48" viewBox="0 0 48 48">
        <path d="M0 22C2 8 12 0 24 0C38 0 48 10 48 21C48 28 43 32 36 32C31 32 28 30.500 28 28.500C28 27 30 26 29.500 22C29 14 22 11 16 11C8 11 2 16 0 22Z" fill="url(#edgeA)" />
        <path d="M0 24C1 16 8 11 16 11C22 11 28 14 29.500 20C27 17.500 22 17 18 21C12 28 14 42 27 47.500C12 50 0 39 0 24Z" fill="url(#edgeB)" />
        <path d="M18 21C14 24 12 30 14 36C17 44 24 48 28 47.500C36 46 42 41 44.500 36.500C45 35 44 35 43 35.500C34 40 20 36 18 21Z" fill="#10559f" />
      </svg></TaskItem>
      <TaskItem>
        <div className="relative flex h-[80px] w-[80px] shrink-0 items-center justify-center rounded-[10px] border-2 border-[#323232] bg-[#292929]">
          <svg width="48" height="48" viewBox="0 0 48 48"><path d="M24 24L3.200 12A24 24 0 0 1 44.800 12Z" fill="#e33b2e" /><path d="M24 24L44.800 12A24 24 0 0 1 24 48L34 30Z" fill="#fbc116" /><path d="M24 24L34.400 30L24 48A24 24 0 0 1 3.200 12Z" fill="#2a9a47" /><circle cx="24" cy="24" r="12" fill="#fff" /><circle cx="24" cy="24" r="9.500" fill="#2f7bea" /></svg>
          <div className="absolute right-[4px] top-[4px] flex size-[32px] items-center justify-center rounded-full bg-[#0696a6] text-[18px] font-semibold text-[#b9dde2]">J</div>
          <div className="absolute bottom-0 left-[22px] h-[6px] w-[32px] rounded-full bg-[#4cc2ff]" />
        </div>
      </TaskItem>
      <TaskItem dot><svg width="48" height="36" viewBox="0 0 48 36"><rect width="48" height="36" rx="1.500" fill="url(#term)" /><rect width="16" height="6" fill="#cccccc" /><rect x="16" width="16" height="6" fill="#999" /><rect x="32" width="16" height="6" fill="#666" /><path d="M9 14L16 21" stroke="#e6e6e6" strokeWidth="5" strokeLinecap="round" /><path d="M16 21.500L9 28.500" stroke="#9c9c9c" strokeWidth="5" strokeLinecap="round" /><rect x="23" y="26" width="16" height="5" fill="#e0e0e0" /></svg></TaskItem>
      <TaskItem dot>
        <FaWhatsapp size={54} className="text-[#25d366]" />
        <div className="absolute left-[42px] top-[12px] flex h-[32px] w-[41px] items-center justify-center rounded-full bg-[#4cc2ff] text-[22px] tracking-[-1px] text-black">23</div>
      </TaskItem>
      <TaskItem dot><svg width="42" height="42" viewBox="0 0 42 42"><rect width="42" height="42" rx="5" fill="url(#photo)" /><path d="M8 42L26 24Q28 22 30 24L42 35V37Q42 42 37 42Z" fill="#0b74c8" /><path d="M0 34L18 16Q20.500 14 23 16L28 21L8 41.500Q2 43 0 37Z" fill="url(#mount)" /><circle cx="31" cy="8" r="4" fill="#f2f2f4" /></svg></TaskItem>
      <div className="w-[132px] shrink-0" />
      <div className="flex w-[64px] justify-center"><Chevron w={24} h={14} stroke={2.6} className="rotate-180" /></div>
      <div className="flex w-[64px] justify-center"><svg width="32" height="22" viewBox="0 0 32 22"><circle cx="16" cy="9" r="9" fill="#8a8a8a" /><circle cx="8" cy="14" r="8" fill="#b9b9b9" /><circle cx="24.500" cy="14.500" r="7.500" fill="#dedede" /><path d="M2 19L19 11L31 19Q29 22 25 22H8Q4 22 2 19Z" fill="#fff" /></svg></div>
      <div className="w-[88px] pb-[2px] text-center leading-[32px] tracking-[-0.5px]"><div>ENG</div><div>IN</div></div>
      <div className="ml-[8px] flex w-[48px] justify-center"><svg width="34" height="26" viewBox="0 0 34 26" fill="none" strokeWidth="2.600"><path d="M1 11Q17 -8 33 11" stroke="#505050" /><path d="M5 15Q17 1 29 15M10 19Q17 10.500 24 19" stroke="#fff" /><circle cx="17" cy="22.500" r="2.800" fill="#fff" /></svg></div>
      <div className="flex w-[48px] justify-center"><svg width="34" height="32" viewBox="0 0 34 32" fill="none" strokeWidth="2.400"><path d="M2 11H7L14 4V28L7 21H2Z" stroke="#fff" strokeLinejoin="round" /><path d="M18 11Q22 16 18 21" stroke="#fff" /><path d="M22 7Q29 16 22 25M27 3Q36 16 27 29" stroke="#555" /></svg></div>
      <div className="flex w-[48px] justify-center pb-[5px]"><svg width="34" height="34" viewBox="0 0 34 34"><path d="M17 10H25Q28 10 28 13V27Q28 30 25 30H4" fill="none" stroke="#fff" strokeWidth="2.400" /><rect x="29" y="16" width="4" height="8" rx="1" fill="#fff" /><path d="M9 0Q3 5 1 12Q0 20 3 24L8 19L7 24Q13 23 14 15Q14 6 9 0Z" fill="#fff" /><path d="M8 17L2 27" stroke="#1c1c1c" strokeWidth="1.200" /></svg></div>
      <div className="flex-1 whitespace-nowrap pb-[4px] pr-[38px] text-right leading-[32px] tracking-[-0.2px]"><div className="tracking-[-1px]">22:39</div><div>28-04-2025</div></div>
    </div>
  );
}

export default function App() {
  return (
    <div className="flex h-[1800px] w-[2880px] flex-col overflow-hidden bg-white font-['Liberation_Sans',sans-serif]">
      <ChromeTabs />
      <ChromeToolbar />
      <div className="flex min-h-0 flex-1">
        <div className="flex min-w-0 flex-1 flex-col overflow-hidden">
          <Navbar />
          <div className="flex min-h-0 flex-1 flex-col pl-[29px] pr-[28px]">
            <div className="flex h-[88px] shrink-0 items-center justify-between rounded-b-[8px] bg-[#ddebf6] pb-[16px] pl-[32px] pr-[35px] text-[28px] text-[#456f90]">
              <span>Triggered use_greet_plugin, it should start any moment now.</span>
              <Cross size={20} stroke={6} className="text-[#9fbccf]" />
            </div>
            <DagHeader />
            <FilterBar />
            <Legend />
            <div className="flex min-h-0 flex-1">
              <GridPanel />
              <div className="w-[12px] shrink-0 bg-[#e2e8f0]" />
              <RunPanel />
            </div>
          </div>
        </div>
        <Scrollbar />
      </div>
      <Taskbar />
    </div>
  );
}
